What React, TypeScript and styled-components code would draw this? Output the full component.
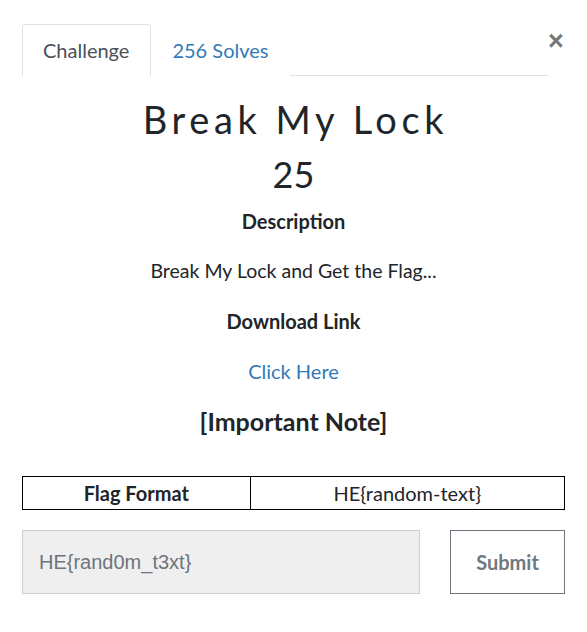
import styled, { createGlobalStyle } from "styled-components";

const GlobalStyle = createGlobalStyle`
  html, body {
    margin: 0;
    padding: 0;
    background: #fff;
  }
  body {
    font-family: Lato, "Noto Sans", sans-serif;
    color: #212529;
  }
`;

const Modal = styled.div`
  box-sizing: border-box;
  width: 587px;
  padding: 24px 22px 0 22px;
`;

const Header = styled.div`
  display: flex;
  align-items: flex-start;
`;

const Nav = styled.ul`
  display: flex;
  flex: 1;
  list-style: none;
  margin: 0;
  padding: 0;
  border-bottom: 1px solid #dee2e6;
`;

const Tab = styled.li<{ $active?: boolean }>`
  box-sizing: border-box;
  margin-bottom: -1px;
  padding: 10px 21px 10px 20px;
  font-size: 20px;
  line-height: 30px;
  border: 1px solid ${(p) => (p.$active ? "#dee2e6" : "transparent")};
  border-bottom-color: ${(p) => (p.$active ? "#fff" : "transparent")};
  border-radius: 4px 4px 0 0;
  color: ${(p) => (p.$active ? "#495057" : "#337ab7")};
  background: #fff;
`;

const Close = styled.button`
  border: 0;
  background: none;
  padding: 0;
  margin: 5px 1px 0 0;
  width: 16px;
  font-family: "Liberation Sans", Arial, sans-serif;
  font-size: 27px;
  font-weight: 700;
  line-height: 24px;
  color: #777;
  text-align: center;
`;

const Body = styled.div`
  display: flex;
  flex-direction: column;
  align-items: center;
  text-align: center;
`;

const Title = styled.h2`
  margin: 20px 0 0 0;
  padding-left: 4px;
  font-family: Lato, sans-serif;
  font-weight: 400;
  font-size: 38px;
  line-height: 46px;
  letter-spacing: 4.6px;
  color: #212529;
`;

const Value = styled.h3`
  margin: 11px 0 0 0;
  font-weight: 400;
  font-size: 36px;
  line-height: 43px;
`;

const Line = styled.div<{ $size: number; $bold?: boolean }>`
  margin-top: 20px;
  font-size: ${(p) => p.$size}px;
  font-weight: ${(p) => (p.$bold ? 700 : 400)};
  line-height: 30px;
  height: 30px;
  &:first-of-type {
    margin-top: 10px;
  }
`;

const Link = styled.a`
  color: #337ab7;
  text-decoration: none;
`;

const Table = styled.table`
  width: 100%;
  margin-top: 40px;
  border-collapse: collapse;
  font-size: 20px;
`;

const Cell = styled.td<{ $bold?: boolean; $width?: string }>`
  border: 1px solid #000;
  padding: 1px 6px;
  line-height: 30px;
  font-weight: ${(p) => (p.$bold ? 700 : 400)};
  width: ${(p) => p.$width ?? "auto"};
`;

const Form = styled.form`
  display: flex;
  gap: 30px;
  margin-top: 20px;
`;

const Input = styled.input`
  flex: 1;
  box-sizing: border-box;
  height: 64px;
  padding: 0 16px;
  background: #efefef;
  border: 1px solid #ccd0d5;
  font-family: "Liberation Sans", Arial, sans-serif;
  font-size: 20px;
  color: #495057;
  outline: none;
  &::placeholder {
    color: #6c757d;
  }
`;

const SubmitButton = styled.button`
  box-sizing: border-box;
  width: 115px;
  height: 64px;
  background: #fff;
  border: 1px solid #6c757d;
  font-family: Lato, sans-serif;
  font-size: 20px;
  font-weight: 700;
  color: #707880;
`;

export default function App() {
  return (
    <Modal>
      <GlobalStyle />
      <Header>
        <Nav>
          <Tab $active>Challenge</Tab>
          <Tab>256 Solves</Tab>
        </Nav>
        <Close aria-label="Close">×</Close>
      </Header>
      <Body>
        <Title>Break My Lock</Title>
        <Value>25</Value>
        <Line $size={20} $bold>
          Description
        </Line>
        <Line $size={19.5}>Break My Lock and Get the Flag...</Line>
        <Line $size={20} $bold>
          Download Link
        </Line>
        <Line $size={20}>
          <Link href="#">Click Here</Link>
        </Line>
        <Line $size={25} $bold>
          [Important Note]
        </Line>
        <Table>
          <tbody>
            <tr>
              <Cell $bold $width="42%">
                Flag Format
              </Cell>
              <Cell>HE{"{"}random-text{"}"}</Cell>
            </tr>
          </tbody>
        </Table>
      </Body>
      <Form onSubmit={(e) => e.preventDefault()}>
        <Input placeholder="HE{rand0m_t3xt}" />
        <SubmitButton type="submit">Submit</SubmitButton>
      </Form>
    </Modal>
  );
}
